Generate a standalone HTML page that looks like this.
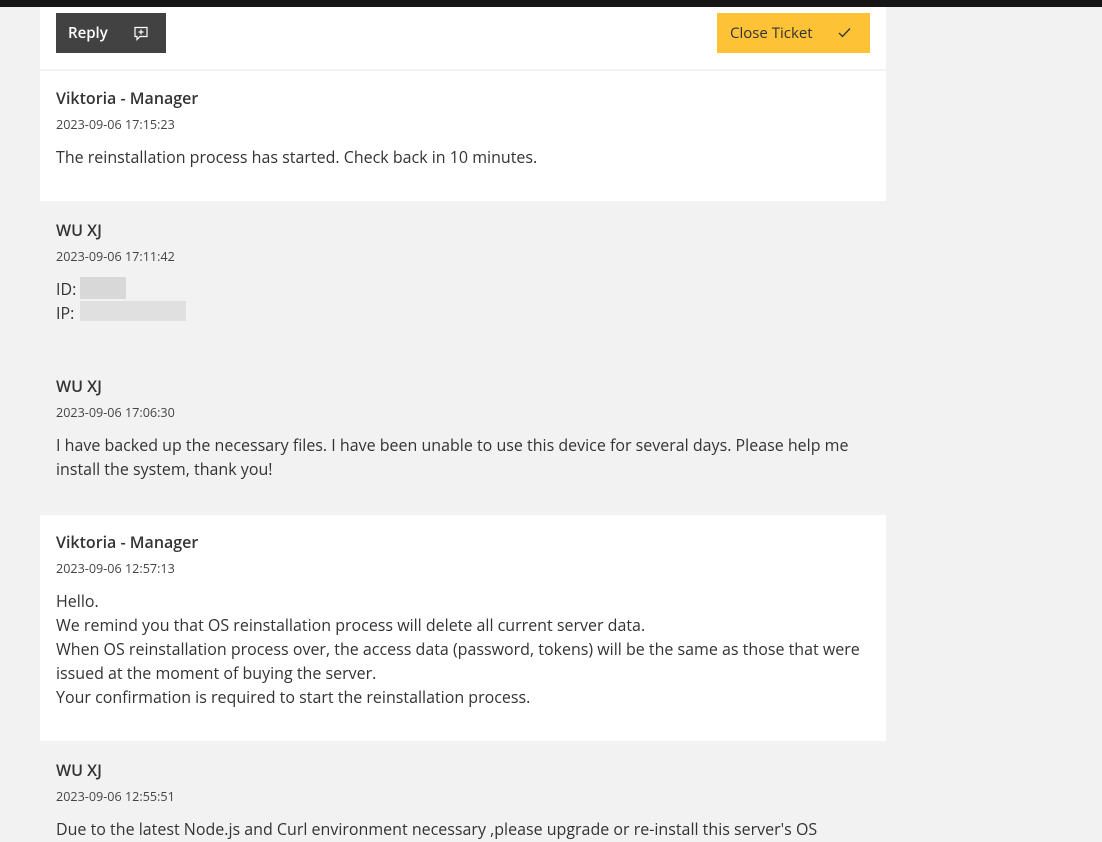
<!DOCTYPE html>
<html><head><style>
body{margin:0;background:#f2f2f2;width:1102px;height:842px;overflow:hidden;font-family:"Open Sans","Liberation Sans",sans-serif;color:#333;position:relative}
.top{position:absolute;left:0;top:0;width:1102px;height:7px;background:#161616}
.bar{position:absolute;left:40px;top:7px;width:846px;height:62px;background:#fff}
.btn{position:absolute;height:40px;top:6px;font-size:15px;line-height:40px}
.reply{left:16px;width:110px;background:#424242;color:#fff}
.close{left:677px;width:153px;background:#fdc236;color:#333}
.card{position:absolute;left:40px;width:846px}
.w{background:#fff}
.t{position:absolute;left:56px;white-space:nowrap}
.n{font-size:16px;font-weight:600;color:#333}
.d{font-size:12.6px;color:#444}
.p{font-size:16px;color:#333;line-height:24px}
.blur{position:absolute;background:#dcdcdc}
</style></head><body>
<div class="top"></div>
<div class="bar">
 <div class="btn reply"><span style="position:absolute;left:12px;font-weight:600">Reply</span>
  <svg style="position:absolute;left:77px;top:13px" width="16" height="15" viewBox="0 0 16 15" fill="none" stroke="#fff" stroke-width="1.2"><path d="M2 1.5h12v9H7l-3 3v-3H2z"/><path d="M8 3.5v5M5.5 6h5"/></svg></div>
 <div class="btn close"><span style="position:absolute;left:13px">Close Ticket</span>
  <svg style="position:absolute;left:121px;top:14px" width="13" height="11" viewBox="0 0 13 11" fill="none" stroke="#333" stroke-width="1.3"><path d="M1 6l3.5 3.5L12 1.5"/></svg></div>
</div>
<div class="card w" style="top:71px;height:130px"></div>
<div class="card w" style="top:515px;height:226px"></div>

<div class="t n" style="top:87px">Viktoria - Manager</div>
<div class="t d" style="top:116px">2023-09-06 17:15:23</div>
<div class="t p" style="top:145px">The reinstallation process has started. Check back in 10 minutes.</div>

<div class="t n" style="top:219px">WU XJ</div>
<div class="t d" style="top:248px">2023-09-06 17:11:42</div>
<div class="t p" style="top:277px">ID:<br>IP:</div>
<div class="blur" style="left:80px;top:277px;width:46px;height:22px;background:#d8d8d8"></div>
<div class="blur" style="left:80px;top:301px;width:106px;height:20px;background:#e0e0e0"></div>

<div class="t n" style="top:375px">WU XJ</div>
<div class="t d" style="top:404px">2023-09-06 17:06:30</div>
<div class="t p" style="top:433px">I have backed up the necessary files. I have been unable to use this device for several days. Please help me<br>install the system, thank you!</div>

<div class="t n" style="top:531px">Viktoria - Manager</div>
<div class="t d" style="top:560px">2023-09-06 12:57:13</div>
<div class="t p" style="top:589px">Hello.<br>We remind you that OS reinstallation process will delete all current server data.<br>When OS reinstallation process over, the access data (password, tokens) will be the same as those that were<br>issued at the moment of buying the server.<br>Your confirmation is required to start the reinstallation process.</div>

<div class="t n" style="top:759px">WU XJ</div>
<div class="t d" style="top:788px">2023-09-06 12:55:51</div>
<div class="t p" style="top:817px">Due to the latest Node.js and Curl environment necessary ,please upgrade or re-install this server's OS</div>
</body></html>
